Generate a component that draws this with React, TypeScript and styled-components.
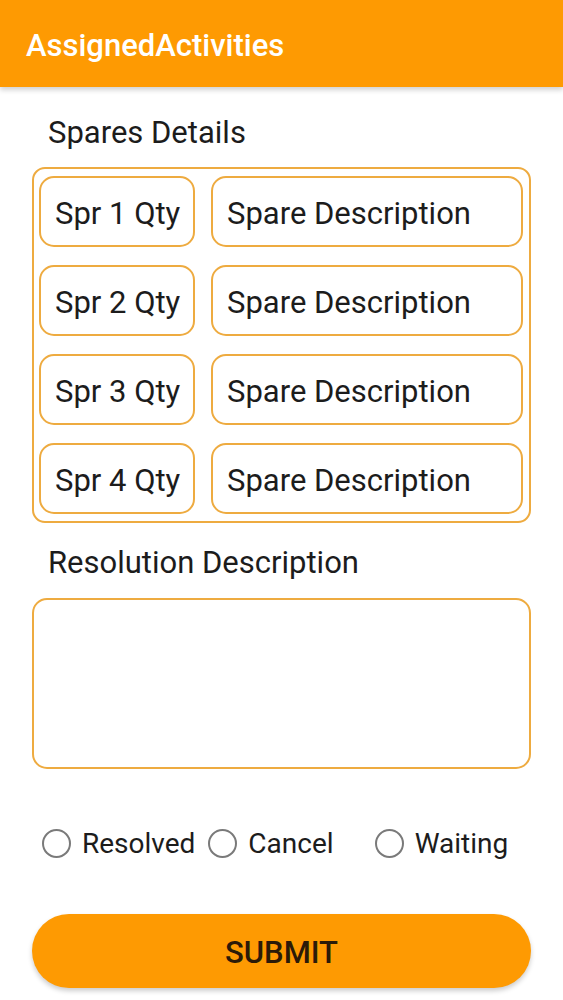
import * as React from "react";
import styled, { createGlobalStyle } from "styled-components";

const rows = [1, 2, 3, 4];
const statuses = ["Resolved", "Cancel", "Waiting"];

export default function App() {
	return (
		<>
			<GlobalStyle />
			<Page>
				<Header>
					<Title>AssignedActivities</Title>
				</Header>
				<Content>
					<Label>Spares Details</Label>
					<SparesBox>
						{rows.map(n => (
							<SpareRow key={n}>
								<Field>Spr {n} Qty</Field>
								<Field>Spare Description</Field>
							</SpareRow>
						))}
					</SparesBox>
					<Label $top={21}>Resolution Description</Label>
					<TextArea />
					<RadioGroup>
						{statuses.map(s => (
							<RadioItem key={s}>
								<Circle />
								<RadioText>{s}</RadioText>
							</RadioItem>
						))}
					</RadioGroup>
					<SubmitButton>SUBMIT</SubmitButton>
				</Content>
			</Page>
		</>
	);
}

const GlobalStyle = createGlobalStyle`
	body {
		margin: 0;
		background: #fff;
		font-family: Roboto, "Noto Sans", sans-serif;
		color: #1c1c1c;
	}
`;

const Page = styled.div`
	width: 563px;
	min-height: 1000px;
	background: #fff;
`;

const Header = styled.div`
	height: 87px;
	background: #fe9a02;
	display: flex;
	align-items: center;
	padding-left: 26px;
	box-shadow: 0 3px 5px rgba(0, 0, 0, 0.18);
	box-sizing: border-box;
`;

const Title = styled.div`
	color: #fff;
	font-size: 31px;
	font-weight: 500;
	margin-top: 3px;
`;

const Content = styled.div`
	padding: 0 32px;
	display: flex;
	flex-direction: column;
`;

const Label = styled.div<{ $top?: number }>`
	margin-top: ${p => p.$top ?? 27}px;
	padding-left: 16px;
	font-size: 31px;
	line-height: 38px;
	height: 36px;
	color: #1c1c1c;
`;

const SparesBox = styled.div`
	margin-top: 17px;
	border: 2px solid #eeab40;
	border-radius: 13px;
	padding: 7px 6px 7px 5px;
	display: flex;
	flex-direction: column;
	gap: 18px;
`;

const SpareRow = styled.div`
	display: grid;
	grid-template-columns: 156px 1fr;
	gap: 16px;
`;

const Field = styled.div`
	height: 71px;
	box-sizing: border-box;
	border: 2px solid #eeab40;
	border-radius: 15px;
	display: flex;
	align-items: center;
	padding: 3px 0 0 14px;
	font-size: 31px;
	color: #1c1c1c;
	white-space: nowrap;
`;

const TextArea = styled.div`
	margin-top: 18px;
	height: 171px;
	box-sizing: border-box;
	border: 2px solid #eeab40;
	border-radius: 15px;
`;

const RadioGroup = styled.div`
	margin-top: 56px;
	display: grid;
	grid-template-columns: repeat(3, 1fr);
	height: 36px;
	align-items: center;
`;

const RadioItem = styled.div`
	display: flex;
	align-items: center;
	gap: 11px;
	padding-left: 10px;
`;

const Circle = styled.span`
	width: 29px;
	height: 29px;
	box-sizing: border-box;
	border: 2.5px solid #7a7a7a;
	border-radius: 50%;
	flex-shrink: 0;
`;

const RadioText = styled.span`
	font-size: 28px;
	color: #1c1c1c;
`;

const SubmitButton = styled.div`
	margin-top: 53px;
	height: 74px;
	border-radius: 37px;
	background: #fe9a02;
	display: flex;
	align-items: center;
	justify-content: center;
	padding-top: 2px;
	box-sizing: border-box;
	font-size: 31px;
	font-weight: 500;
	color: #2b1a08;
	box-shadow: 0 3px 5px rgba(0, 0, 0, 0.2);
`;
